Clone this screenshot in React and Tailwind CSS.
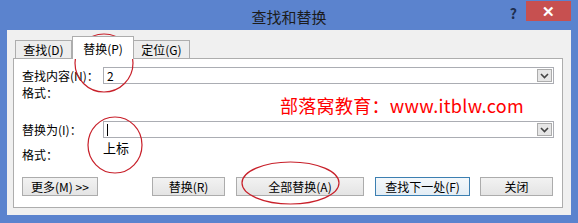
import React from "react";

const ui = "font-['Noto_Sans_CJK_SC','Noto_Sans',sans-serif]";

function Chevron() {
  return (
    <svg width="9" height="6" viewBox="0 0 9 6">
      <path d="M1 1 L4.5 4.5 L8 1" fill="none" stroke="#444" strokeWidth="1.6" />
    </svg>
  );
}

function Combo({ children }) {
  return (
    <div className="flex h-[17px] flex-1 items-stretch border border-[#abadb3] bg-white">
      <div className="flex flex-1 items-center pl-[3px] text-[12px] leading-[15px] text-black">{children}</div>
      <div className="m-px flex w-[15px] items-center justify-center border border-[#acacac] bg-[#e6e6e6]">
        <Chevron />
      </div>
    </div>
  );
}

function Btn({ w, children, focus }) {
  return (
    <div
      className={
        "flex h-[19px] items-center justify-center border text-[12px] leading-[17px] text-black " +
        (focus
          ? "border-[#3c7fb1] bg-gradient-to-b from-[#f4f8fb] to-[#e3edf5]"
          : "border-[#acacac] bg-gradient-to-b from-[#f2f2f2] to-[#e4e4e4]")
      }
      style={{ width: w }}
    >
      {children}
    </div>
  );
}

export default function App() {
  return (
    <div className={"relative flex h-[223px] w-[578px] flex-col bg-[#5b83ce] px-[7px] pb-[8px] " + ui}>
      {/* title bar */}
      <div className="grid h-[31px] grid-cols-[1fr_auto_1fr]">
        <div />
        <div className="pt-[7px] text-[15px] leading-[20px] text-[#1c1c1c]">查找和替换</div>
        <div className="flex items-start justify-end">
          <div className="mr-[9px] mt-[5px] text-[14px] font-bold leading-[16px] text-[#1e2e50]">?</div>
          <div className="mt-[1px] flex h-[20px] w-[45px] items-center justify-center bg-[#c75050] text-[15px] font-bold leading-[16px] text-white">
            ✕
          </div>
        </div>
      </div>

      {/* body */}
      <div className="flex flex-1 flex-col bg-[#f0f0f0] pl-[6px] pr-[8px] pb-[7px]">
        {/* tabs */}
        <div className="flex h-[28px] items-end pl-[2px] pt-[5px] text-[12px] text-black">
          <div className="flex h-[18px] w-[57px] items-center justify-center border border-b-0 border-[#adadad] bg-[#ededed] leading-[16px]">
            查找(D)
          </div>
          <div className="relative z-10 -mb-px flex h-[23px] w-[62px] items-start justify-center border border-b-0 border-[#adadad] bg-white pt-[4px] leading-[16px]">
            替换(P)
          </div>
          <div className="flex h-[18px] w-[56px] items-center justify-center border border-b-0 border-l-0 border-[#adadad] bg-[#ededed] leading-[16px]">
            定位(G)
          </div>
        </div>

        {/* panel */}
        <div className="flex h-[150px] flex-col border border-[#adadad] bg-white pl-[8px] pr-[8px] pt-[8px] text-[12px] text-black">
          <div className="flex h-[17px] items-center">
            <div className="w-[81px] leading-[14px]">查找内容(N)：</div>
            <Combo>2</Combo>
          </div>
          <div className="mt-[2px] flex h-[29px] items-start">
            <div className="w-[81px] leading-[14px]">格式：</div>
            <div className="ml-[177px] mt-[8px] whitespace-nowrap text-[18px] leading-[22px] tracking-[0.3px] text-[#ff0000]">
              部落窝教育：www.itblw.com
            </div>
          </div>
          <div className="mt-[6px] flex h-[17px] items-center">
            <div className="w-[81px] leading-[14px]">替换为(I)：</div>
            <Combo>
              <span className="h-[12px] w-px bg-black" />
            </Combo>
          </div>
          <div className="flex h-[24px] items-start">
            <div className="w-[81px] pt-[10px] leading-[14px]">格式：</div>
            <div className="pt-[2px] text-[13px] leading-[16px]">上标</div>
          </div>
          <div className="mt-[15px] flex items-center">
            <Btn w={76}>更多(M) &gt;&gt;</Btn>
            <div className="w-[54px]" />
            <Btn w={73}>替换(R)</Btn>
            <div className="w-[11px]" />
            <Btn w={128}>全部替换(A)</Btn>
            <div className="w-[11px]" />
            <Btn w={95} focus>
              查找下一处(F)
            </Btn>
            <div className="w-[10px]" />
            <Btn w={73}>关闭</Btn>
          </div>
        </div>
      </div>

      {/* hand-drawn annotation ellipses */}
      <svg className="pointer-events-none absolute left-0 top-0" width="578" height="223">
        <g fill="none" stroke="#c8202a" strokeWidth="1.2">
          <ellipse cx="104" cy="63" rx="29" ry="29" />
          <ellipse cx="115" cy="145" rx="27" ry="28" />
          <ellipse cx="290.5" cy="183" rx="48.5" ry="21" />
        </g>
      </svg>
    </div>
  );
}
